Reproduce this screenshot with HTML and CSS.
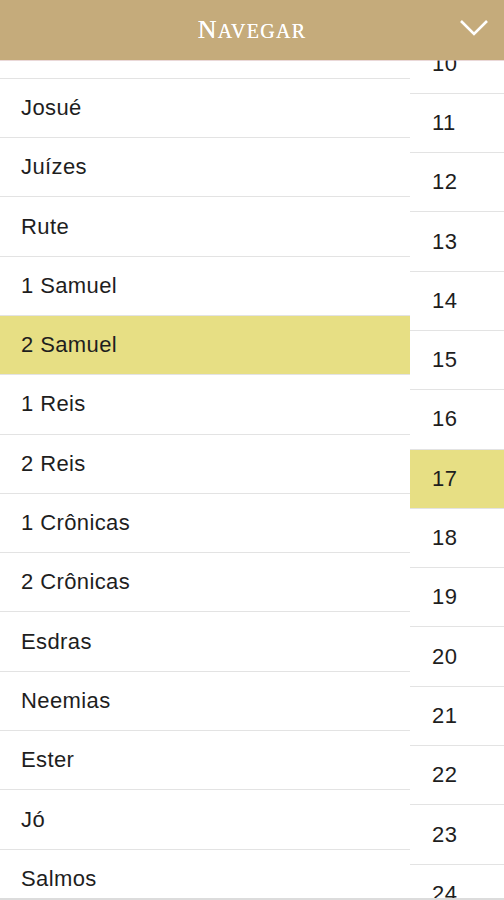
FILE: index.html
```html
<!DOCTYPE html>
<html lang="pt">
<head>
<meta charset="utf-8">
<title>Navegar</title>
<link rel="stylesheet" href="styles.css">
</head>
<body>
<header class="topbar">
  <span class="spacer"></span>
  <h1 class="title"><span class="cap">N</span><span class="sc">avegar</span></h1>
  <span class="chev">
    <svg width="30" height="18" viewBox="0 0 30 18"><polyline points="2,2 15,15 28,2" fill="none" stroke="#fff" stroke-width="2.6"/></svg>
  </span>
</header>
<main class="panes">
  <ul class="books">
    <li class="row">Deuteronômio</li>
    <li class="row">Josué</li>
    <li class="row">Juízes</li>
    <li class="row">Rute</li>
    <li class="row">1 Samuel</li>
    <li class="row active">2 Samuel</li>
    <li class="row">1 Reis</li>
    <li class="row">2 Reis</li>
    <li class="row">1 Crônicas</li>
    <li class="row">2 Crônicas</li>
    <li class="row">Esdras</li>
    <li class="row">Neemias</li>
    <li class="row">Ester</li>
    <li class="row">Jó</li>
    <li class="row">Salmos</li>
    <li class="row">Provérbios</li>
  </ul>
  <ul class="chapters">
    <li class="row">10</li>
    <li class="row">11</li>
    <li class="row">12</li>
    <li class="row">13</li>
    <li class="row">14</li>
    <li class="row">15</li>
    <li class="row">16</li>
    <li class="row active">17</li>
    <li class="row">18</li>
    <li class="row">19</li>
    <li class="row">20</li>
    <li class="row">21</li>
    <li class="row">22</li>
    <li class="row">23</li>
    <li class="row">24</li>
    <li class="row">25</li>
  </ul>
</main>
</body>
</html>
```
FILE: styles.css
```css
html, body {
  margin: 0;
  padding: 0;
}
body {
  width: 504px;
  height: 900px;
  overflow: hidden;
  background: #fff;
  font-family: "Liberation Sans", Arial, sans-serif;
  color: #1e1e1e;
  display: flex;
  flex-direction: column;
}
.topbar {
  height: 60px;
  flex: none;
  background: #c5ab7b;
  display: grid;
  grid-template-columns: 1fr auto 1fr;
  align-items: center;
  box-shadow: 0 1px 0 rgba(220, 190, 190, 0.6);
  position: relative;
  z-index: 2;
}
.title {
  margin: 0;
  font-family: "Liberation Serif", "Times New Roman", serif;
  font-weight: normal;
  color: #fff;
  line-height: 1;
  letter-spacing: 1.3px;
  text-transform: uppercase;
  padding-bottom: 6px;
  text-shadow: 0 0 0.4px #fff;
}
.cap {
  font-size: 26px;
}
.sc {
  font-size: 20px;
}
.chev {
  justify-self: end;
  padding-right: 15px;
  display: flex;
  padding-bottom: 4px;
}
.panes {
  flex: 1;
  display: flex;
  overflow: hidden;
  border-bottom: 2px solid #dcdcdc;
}
ul {
  list-style: none;
  margin: 0;
  padding: 0;
}
.row {
  height: 59.3px;
  box-sizing: border-box;
  border-bottom: 1px solid #e3e3e3;
  display: flex;
  align-items: center;
  font-size: 22px;
  letter-spacing: 0.4px;
}
.books {
  width: 410px;
  flex: none;
  margin-top: -40.5px;
}
.books .row {
  padding-left: 21px;
}
.chapters {
  flex: 1;
  margin-top: -25.5px;
}
.chapters .row {
  padding-left: 22px;
}
.row.active {
  background: #e7df84;
}
```
